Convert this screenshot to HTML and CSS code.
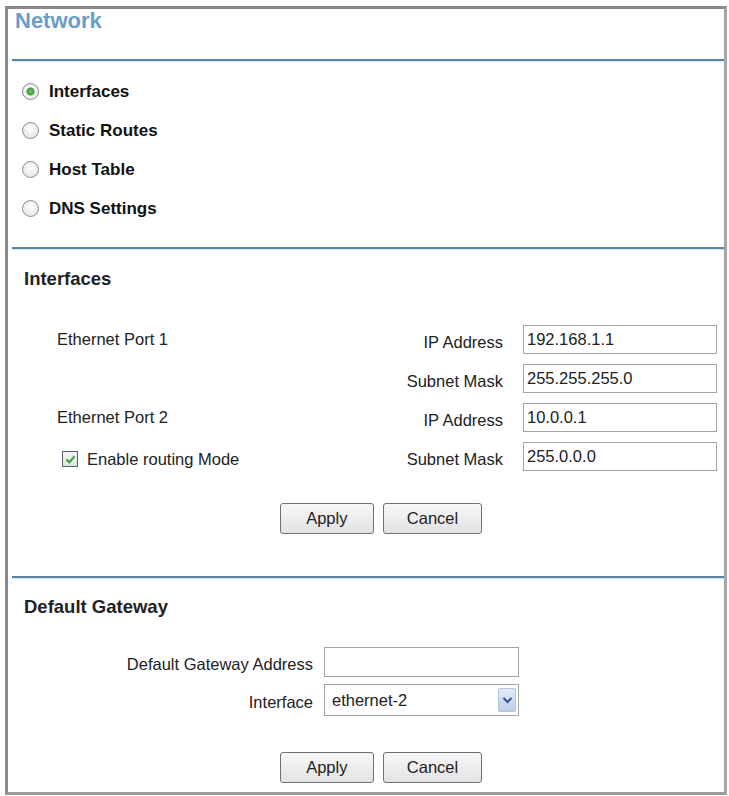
FILE: index.html
```html
<!DOCTYPE html>
<html lang="en">

<head>
    <meta charset="UTF-8">
    <meta name="viewport" content="width=device-width, initial-scale=1.0">
    <title>Network</title>
    <link rel="stylesheet" href="styles.css">
</head>

<body>
    <div class="frame">
        <div class="header">
            <h1 class="title">Network</h1>
        </div>

        <div class="section nav">
            <label class="choice"><span class="radio checked"></span>Interfaces</label>
            <label class="choice"><span class="radio"></span>Static Routes</label>
            <label class="choice"><span class="radio"></span>Host Table</label>
            <label class="choice"><span class="radio"></span>DNS Settings</label>
        </div>

        <div class="section interfaces">
            <h2 class="heading">Interfaces</h2>
            <div class="iface-grid">
                <div class="port">Ethernet Port 1</div>
                <label class="field-label">IP Address</label>
                <input class="text" type="text" value="192.168.1.1">

                <div></div>
                <label class="field-label">Subnet Mask</label>
                <input class="text" type="text" value="255.255.255.0">

                <div class="port">Ethernet Port 2</div>
                <label class="field-label">IP Address</label>
                <input class="text" type="text" value="10.0.0.1">

                <label class="check">
                    <span class="box">
                        <svg width="11" height="11" viewBox="0 0 11 11">
                            <polyline points="1.5,5.5 4.3,8.3 9.5,2.3" fill="none" stroke="#3d9a3d" stroke-width="2"/>
                        </svg>
                    </span>
                    Enable routing Mode
                </label>
                <label class="field-label">Subnet Mask</label>
                <input class="text" type="text" value="255.0.0.0">
            </div>
            <div class="actions">
                <button class="btn">Apply</button>
                <button class="btn">Cancel</button>
            </div>
        </div>

        <div class="section gateway">
            <h2 class="heading">Default Gateway</h2>
            <div class="gw-grid">
                <label class="field-label">Default Gateway Address</label>
                <input class="text gw-input" type="text" value="">

                <label class="field-label">Interface</label>
                <div class="select-wrap">
                    <select class="select">
                        <option>ethernet-2</option>
                        <option>ethernet-1</option>
                    </select>
                    <span class="arrow">
                        <svg width="11" height="8" viewBox="0 0 11 8">
                            <polyline points="1.5,2 5.5,6 9.5,2" fill="none" stroke="#34507e" stroke-width="2"/>
                        </svg>
                    </span>
                </div>
            </div>
            <div class="actions gw-actions">
                <button class="btn">Apply</button>
                <button class="btn">Cancel</button>
            </div>
        </div>
    </div>
</body>

</html>
```

FILE: styles.css
```css
body {
    margin: 0;
    font-family: "Liberation Sans", Arial, sans-serif;
    color: #222;
    background-color: #fff;
}

.frame {
    box-sizing: border-box;
    width: 722px;
    height: 789px;
    margin: 6px 0 0 5px;
    border: 3px solid #8a8a8a;
    border-right-color: #a6a6a6;
    border-bottom-color: #9c9c9c;
}

.header {
    height: 50px;
    padding-left: 7px;
}

.title {
    margin: 0;
    font-size: 22px;
    line-height: 24px;
    font-weight: bold;
    color: #6a9dcc;
}

.section {
    margin-left: 4px;
    border-top: 2px solid #5a84a8;
    box-shadow: inset 0 1px 0 #d6e8f4;
}

/* radio list */
.nav {
    padding: 11px 0 19px 10px;
}

.choice {
    display: flex;
    align-items: center;
    gap: 10px;
    height: 39px;
    font-size: 17px;
    font-weight: bold;
    color: #111;
}

.radio {
    width: 15px;
    height: 15px;
    border: 1px solid #8a8a8a;
    border-radius: 50%;
    background: radial-gradient(circle at 50% 40%, #fff, #d9e0e3);
}

.radio.checked {
    background: radial-gradient(circle, #7cc46c 0, #3f9a3f 3.5px, #f4f7f4 4.5px, #dde3e6 100%);
}

.heading {
    margin: 0;
    padding-left: 12px;
    font-size: 18.5px;
    line-height: 24px;
    font-weight: bold;
    color: #222;
}

/* interfaces */
.interfaces {
    padding: 18px 0 42px 0;
}

.interfaces .heading {
    margin-bottom: 34px;
}

.iface-grid {
    display: grid;
    grid-template-columns: 1fr auto 194px;
    grid-auto-rows: 29px;
    row-gap: 10px;
    column-gap: 20px;
    align-items: center;
    padding: 0 7px 0 45px;
}

.port,
.field-label,
.check {
    font-size: 16.5px;
    color: #222;
}

.field-label {
    justify-self: end;
    padding-top: 5px;
}

.check {
    display: flex;
    align-items: center;
    gap: 9px;
    padding: 5px 0 0 5px;
}

.box {
    display: flex;
    align-items: center;
    justify-content: center;
    width: 14px;
    height: 14px;
    border: 1px solid #55626e;
    background: linear-gradient(#f1f7f1, #dbe8db);
}

.text {
    box-sizing: border-box;
    width: 100%;
    height: 29px;
    margin: 0;
    padding: 0 3px;
    border: 1px solid #a4a4a4;
    font-family: "Liberation Sans", Arial, sans-serif;
    font-size: 16.5px;
    color: #222;
    background-color: #fff;
}

.actions {
    display: flex;
    justify-content: center;
    gap: 9px;
    margin-top: 32px;
    padding-left: 26px;
}

.btn {
    min-width: 94px;
    height: 31px;
    padding: 0 23px;
    border: 1px solid #707070;
    border-radius: 3px;
    background: linear-gradient(#f8f8f8, #e2e2e2);
    font-family: "Liberation Sans", Arial, sans-serif;
    font-size: 16.5px;
    color: #222;
}

/* default gateway */
.gateway {
    padding: 17px 0 9px 0;
}

.gateway .heading {
    margin-bottom: 28px;
}

.gw-grid {
    display: grid;
    grid-template-columns: 301px 195px;
    grid-template-rows: 30px 32px;
    row-gap: 7px;
    column-gap: 11px;
    align-items: center;
}

.gw-input {
    height: 30px;
}

.select-wrap {
    position: relative;
    height: 32px;
}

.select {
    appearance: none;
    -webkit-appearance: none;
    box-sizing: border-box;
    width: 100%;
    height: 32px;
    margin: 0;
    padding: 0 7px;
    border: 1px solid #a4a4a4;
    border-radius: 0;
    background-color: #fff;
    font-family: "Liberation Sans", Arial, sans-serif;
    font-size: 16.5px;
    color: #222;
}

.arrow {
    position: absolute;
    top: 4px;
    right: 3px;
    display: flex;
    align-items: center;
    justify-content: center;
    width: 16px;
    height: 22px;
    border: 1px solid #b4c5df;
    border-radius: 2px;
    background: linear-gradient(#e2eaf7, #bccde9);
    pointer-events: none;
}

.gw-actions {
    margin-top: 36px;
}
```
